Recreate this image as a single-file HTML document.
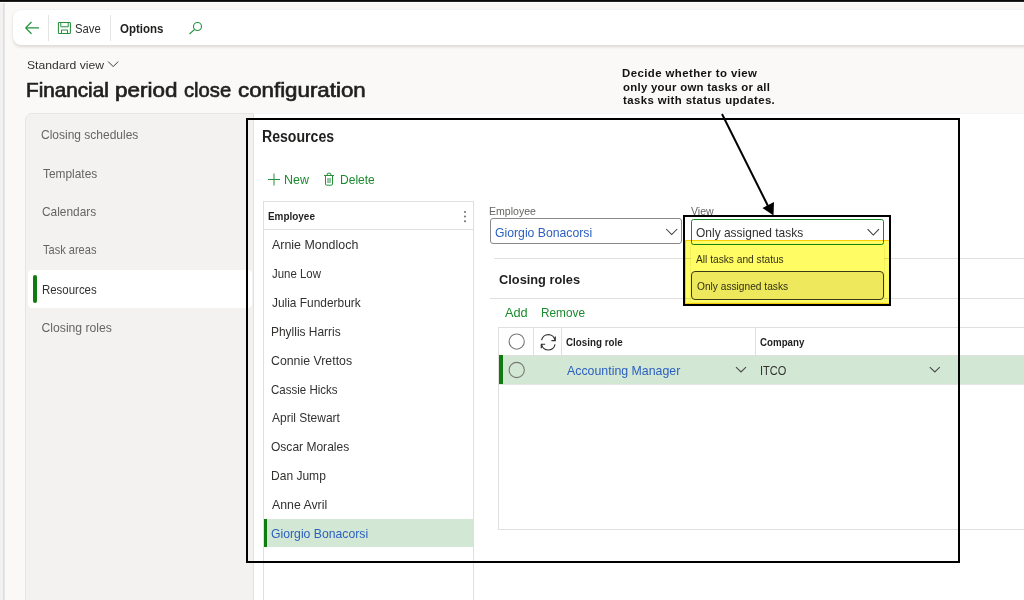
<!DOCTYPE html>
<html><head><meta charset="utf-8">
<style>
*{margin:0;padding:0;box-sizing:border-box}
html,body{width:1024px;height:600px;overflow:hidden}
body{position:relative;background:#faf9f8;font-family:"Liberation Sans",sans-serif;color:#323130}
.a{position:absolute}
.t{position:absolute;white-space:nowrap;line-height:1;transform-origin:0 0}
.g{color:#107c10}
.bl{color:#2b5fc0}
svg{position:absolute;overflow:visible}
</style></head><body>
<!-- top band + left strip -->
<div class="a" style="left:0;top:0;width:1024px;height:2px;background:linear-gradient(#0b0b0b 0,#0b0b0b 50%,#3a3a3a 100%)"></div>
<div class="a" style="left:0;top:2px;width:1024px;height:1px;background:#ffffff"></div>
<div class="a" style="left:0;top:3px;width:3px;height:597px;background:#f2f2f2"></div>
<div class="a" style="left:3px;top:3px;width:2px;height:597px;background:linear-gradient(90deg,#d9d9d9,#ececec)"></div>

<!-- toolbar -->
<div class="a" style="left:13px;top:10px;width:1040px;height:35px;background:#fff;border-radius:8px;box-shadow:0 1.8px 3px rgba(0,0,0,.12),0 0 1px rgba(0,0,0,.06)"></div>
<svg style="left:0;top:0" width="1024" height="50">
  <path d="M25.6 27.9H39M25.6 27.9L31.5 22M25.6 27.9L31.5 33.8" stroke="#23903c" stroke-width="1.25" fill="none"/>
  <rect x="48" y="15" width="1" height="26" fill="#e6e4e2"/>
  <rect x="58.4" y="22.4" width="12" height="11.1" rx="0.8" stroke="#23903c" stroke-width="1.05" fill="none"/>
  <path d="M60.8 22.5V26.8H68.2V22.5M61.5 33.5V30H67.5V33.5" stroke="#23903c" stroke-width="1" fill="none"/>
  <rect x="110" y="15" width="1" height="26" fill="#e6e4e2"/>
  <circle cx="197.5" cy="26.5" r="4" stroke="#23903c" stroke-width="1.1" fill="none"/>
  <path d="M194.6 29.4L189.5 34" stroke="#23903c" stroke-width="1.2" fill="none"/>
</svg>

<!-- header -->
<svg style="left:0;top:0" width="200" height="80"><path d="M108.2 61.6l5 5 5-5" stroke="#3b3a39" stroke-width="1" fill="none"/></svg>

<!-- nav panel -->
<div class="a" style="left:25px;top:113px;width:229px;height:500px;background:#f3f2f1;border:1px solid #e6e5e4;border-top-left-radius:7px"></div>
<div class="a" style="left:28px;top:270px;width:224px;height:38px;background:#fff;border-radius:4px"></div>
<div class="a" style="left:33px;top:275px;width:4px;height:28px;background:#107c10;border-radius:2px"></div>

<!-- content panel -->
<div class="a" style="left:254px;top:114px;width:780px;height:500px;background:#fff;box-shadow:0 -0.5px 1.5px rgba(0,0,0,.07)"></div>

<svg style="left:0;top:0" width="1024" height="600">
  <path d="M268 179.5H280M274 173.5V185.5" stroke="#23903c" stroke-width="1" fill="none"/>
  <path d="M324 175.5h10M327.2 175.3v-1.3a.8.8 0 0 1 .8-.8h2a.8.8 0 0 1 .8.8v1.3M325.5 175.5v8.5a1.2 1.2 0 0 0 1.2 1.2h4.6a1.2 1.2 0 0 0 1.2-1.2v-8.5M328 178v5M330 178v5" stroke="#23903c" stroke-width="1" fill="none"/>
</svg>

<!-- employee grid -->
<div class="a" style="left:263px;top:201px;width:211px;height:420px;border:1px solid #e1dfdd"></div>
<div class="a" style="left:264px;top:229px;width:209px;height:1px;background:#e1dfdd"></div>
<div class="a" style="left:464px;top:210.5px;width:2px;height:2px;background:#6e6c6a;border-radius:1px;box-shadow:0 4.6px 0 #6e6c6a,0 9.2px 0 #6e6c6a"></div>
<div class="a" style="left:264px;top:519px;width:209px;height:28px;background:#d2e8d4"></div>
<div class="a" style="left:264px;top:519px;width:3px;height:28px;background:#107c10"></div>

<!-- right form -->
<div class="a" style="left:490px;top:218px;width:192px;height:26px;border:1px solid #8a8886;border-radius:3px"></div>
<div class="a" style="left:691px;top:219px;width:193px;height:26px;border:1px solid #138a22;border-radius:2.5px"></div>
<svg style="left:0;top:0" width="1024" height="600">
  <path d="M666.2 229l5.5 5.6 5.5-5.6" stroke="#3b3a39" stroke-width="1.05" fill="none"/>
  <path d="M867.6 229.2l5.7 5.8 5.7-5.8" stroke="#3b3a39" stroke-width="1.05" fill="none"/>
</svg>

<div class="a" style="left:494px;top:258px;width:540px;height:1px;background:#e1dfdd"></div>
<div class="a" style="left:490px;top:298px;width:540px;height:1px;background:#e1dfdd"></div>

<!-- closing roles grid -->
<div class="a" style="left:498px;top:327px;width:540px;height:203px;border:1px solid #e1dfdd"></div>
<div class="a" style="left:499px;top:355px;width:530px;height:30px;background:#d2e8d4;border-top:1px solid #e1dfdd;border-bottom:1px solid #e6e6e4"></div>
<div class="a" style="left:499px;top:355px;width:4px;height:29px;background:#107c10"></div>
<div class="a" style="left:533px;top:328px;width:1px;height:56px;background:#e1dfdd"></div>
<div class="a" style="left:561px;top:328px;width:1px;height:56px;background:#e1dfdd"></div>
<div class="a" style="left:755px;top:328px;width:1px;height:56px;background:#e1dfdd"></div>
<svg style="left:0;top:0" width="1024" height="600">
  <circle cx="516.7" cy="341.6" r="7.6" stroke="#7a7876" stroke-width="1.1" fill="none"/>
  <circle cx="516.7" cy="370" r="7.6" stroke="#7a7876" stroke-width="1.1" fill="none"/>
  <path d="M541.6 340.2A6.8 6.8 0 0 1 555 340.2M555.3 336.6V340.6H551.4M555 344.4A6.8 6.8 0 0 1 541.6 344.4M541.3 348.2V344.2H545.2" stroke="#323130" stroke-width="1.15" fill="none"/>
  <path d="M736 367.2l5 4.7 5-4.7" stroke="#4a4847" stroke-width="1.1" fill="none"/>
  <path d="M929.8 367.2l5 4.7 5-4.7" stroke="#4a4847" stroke-width="1.1" fill="none"/>
</svg>

<!-- dropdown list -->
<div class="a" style="left:691px;top:245px;width:193px;height:57px;background:#fff;box-shadow:0 0 2px rgba(0,0,0,.14)"></div>
<div class="a" style="left:691px;top:271px;width:193px;height:28.5px;background:#edebe9;border:1px solid #3b3a39;border-radius:4px"></div>
<div class="a" style="left:685px;top:240px;width:205px;height:64px;background:#fffc64;border:1px solid #f7cf00;mix-blend-mode:multiply;z-index:10"></div>

<!-- annotations -->
<div class="a" style="left:246px;top:118px;width:714px;height:445px;border:2px solid #000"></div>
<div class="a" style="left:683px;top:215px;width:208px;height:91px;border:2px solid #000;z-index:11"></div>
<svg style="left:0;top:0" width="1024" height="600">
  <path d="M722 114L768 206" stroke="#000" stroke-width="2" fill="none"/>
  <path d="M773.5 215.5L762.5 208L774 202Z" fill="#000"/>
</svg>

<div class="t" style="left:74.61px;top:23.20px;font-size:12.8px;color:#323130;transform:scaleX(0.8857);">Save</div>
<div class="t" style="left:120.00px;top:23.10px;font-size:12.5px;font-weight:700;color:#201f1e;transform:scaleX(0.9213);">Options</div>
<div class="t" style="left:26.55px;top:59.00px;font-size:11.6px;color:#323130;transform:scaleX(1.0472);">Standard view</div>
<div class="t" style="left:26.35px;top:80.50px;font-size:19.8px;font-weight:400;-webkit-text-stroke:0.65px #201f1e;color:#201f1e;transform:scaleX(1.0455);">Financial</div>
<div class="t" style="left:115.17px;top:80.50px;font-size:19.8px;font-weight:400;-webkit-text-stroke:0.65px #201f1e;color:#201f1e;transform:scaleX(1.1340);">period</div>
<div class="t" style="left:184.30px;top:80.50px;font-size:19.8px;font-weight:400;-webkit-text-stroke:0.65px #201f1e;color:#201f1e;transform:scaleX(1.0217);">close</div>
<div class="t" style="left:238.30px;top:80.50px;font-size:19.8px;font-weight:400;-webkit-text-stroke:0.65px #201f1e;color:#201f1e;transform:scaleX(1.1274);">configuration</div>
<div class="t" style="left:41.22px;top:129.00px;font-size:12.2px;color:#676563;transform:scaleX(0.9837);">Closing schedules</div>
<div class="t" style="left:42.60px;top:167.50px;font-size:12.2px;color:#676563;transform:scaleX(0.9764);">Templates</div>
<div class="t" style="left:41.52px;top:205.90px;font-size:12.2px;color:#676563;transform:scaleX(0.9759);">Calendars</div>
<div class="t" style="left:42.50px;top:244.40px;font-size:12.2px;color:#676563;transform:scaleX(0.9068);">Task areas</div>
<div class="t" style="left:41.56px;top:283.60px;font-size:12.2px;color:#323130;transform:scaleX(0.9386);">Resources</div>
<div class="t" style="left:41.50px;top:322.20px;font-size:12.2px;color:#676563;">Closing roles</div>
<div class="t" style="left:262.41px;top:128.80px;font-size:15.8px;font-weight:700;color:#201f1e;transform:scaleX(0.8924);">Resources</div>
<div class="t" style="left:284.38px;top:173.80px;font-size:12.2px;color:#1a8a2e;transform:scaleX(1.0217);">New</div>
<div class="t" style="left:339.61px;top:173.80px;font-size:12.2px;color:#1a8a2e;transform:scaleX(0.9882);">Delete</div>
<div class="t" style="left:267.55px;top:210.70px;font-size:10.5px;font-weight:700;color:#201f1e;transform:scaleX(0.9458);">Employee</div>
<div class="t" style="left:271.90px;top:239.00px;font-size:12.6px;color:#323130;transform:scaleX(0.9862);">Arnie Mondloch</div>
<div class="t" style="left:271.90px;top:267.90px;font-size:12.6px;color:#323130;transform:scaleX(0.9074);">June Low</div>
<div class="t" style="left:271.90px;top:296.80px;font-size:12.6px;color:#323130;transform:scaleX(0.9457);">Julia Funderburk</div>
<div class="t" style="left:270.95px;top:325.70px;font-size:12.6px;color:#323130;transform:scaleX(0.9486);">Phyllis Harris</div>
<div class="t" style="left:270.92px;top:354.60px;font-size:12.6px;color:#323130;transform:scaleX(0.9790);">Connie Vrettos</div>
<div class="t" style="left:270.98px;top:383.50px;font-size:12.6px;color:#323130;transform:scaleX(0.9155);">Cassie Hicks</div>
<div class="t" style="left:271.90px;top:412.40px;font-size:12.6px;color:#323130;transform:scaleX(0.9514);">April Stewart</div>
<div class="t" style="left:270.94px;top:441.30px;font-size:12.6px;color:#323130;transform:scaleX(0.9550);">Oscar Morales</div>
<div class="t" style="left:270.94px;top:470.20px;font-size:12.6px;color:#323130;transform:scaleX(0.9554);">Dan Jump</div>
<div class="t" style="left:271.90px;top:499.10px;font-size:12.6px;color:#323130;transform:scaleX(0.9768);">Anne Avril</div>
<div class="t" style="left:270.93px;top:528.00px;font-size:12.6px;color:#2b5fc0;transform:scaleX(0.9704);">Giorgio Bonacorsi</div>
<div class="t" style="left:489.02px;top:205.60px;font-size:10.8px;color:#676563;transform:scaleX(0.9787);">Employee</div>
<div class="t" style="left:494.53px;top:226.60px;font-size:12.6px;color:#2b5fc0;transform:scaleX(0.9704);">Giorgio Bonacorsi</div>
<div class="t" style="left:691.00px;top:206.00px;font-size:10.8px;color:#676563;transform:scaleX(0.9787);">View</div>
<div class="t" style="left:696.05px;top:226.80px;font-size:12.6px;color:#323130;transform:scaleX(0.9505);">Only assigned tasks</div>
<div class="t" style="left:498.60px;top:272.60px;font-size:13.6px;font-weight:700;color:#201f1e;transform:scaleX(0.9419);">Closing roles</div>
<div class="t" style="left:504.60px;top:306.60px;font-size:12.2px;color:#1a8a2e;transform:scaleX(1.0476);">Add</div>
<div class="t" style="left:541.43px;top:306.60px;font-size:12.2px;color:#1a8a2e;transform:scaleX(0.9682);">Remove</div>
<div class="t" style="left:566.30px;top:336.50px;font-size:10.5px;font-weight:700;color:#201f1e;transform:scaleX(0.9333);">Closing role</div>
<div class="t" style="left:759.80px;top:336.50px;font-size:10.5px;font-weight:700;color:#201f1e;transform:scaleX(0.9271);">Company</div>
<div class="t" style="left:566.90px;top:364.80px;font-size:12.6px;color:#2b5fc0;transform:scaleX(0.9809);">Accounting Manager</div>
<div class="t" style="left:759.62px;top:364.80px;font-size:12.6px;color:#323130;transform:scaleX(0.8759);">ITCO</div>
<div class="t" style="left:695.70px;top:253.60px;font-size:10.8px;color:#323130;transform:scaleX(0.9430);">All tasks and status</div>
<div class="t" style="left:696.50px;top:280.60px;font-size:10.8px;color:#323130;transform:scaleX(0.9427);">Only assigned tasks</div>
<div class="t" style="left:622.00px;top:67.60px;font-size:11.4px;letter-spacing:0.429px;font-weight:700;color:#111111;">Decide whether to view</div>
<div class="t" style="left:623.00px;top:81.60px;font-size:11.4px;letter-spacing:0.280px;font-weight:700;color:#111111;">only your own tasks or all</div>
<div class="t" style="left:623.00px;top:95.40px;font-size:11.4px;letter-spacing:0.400px;font-weight:700;color:#111111;">tasks with status updates.</div>
</body></html>
